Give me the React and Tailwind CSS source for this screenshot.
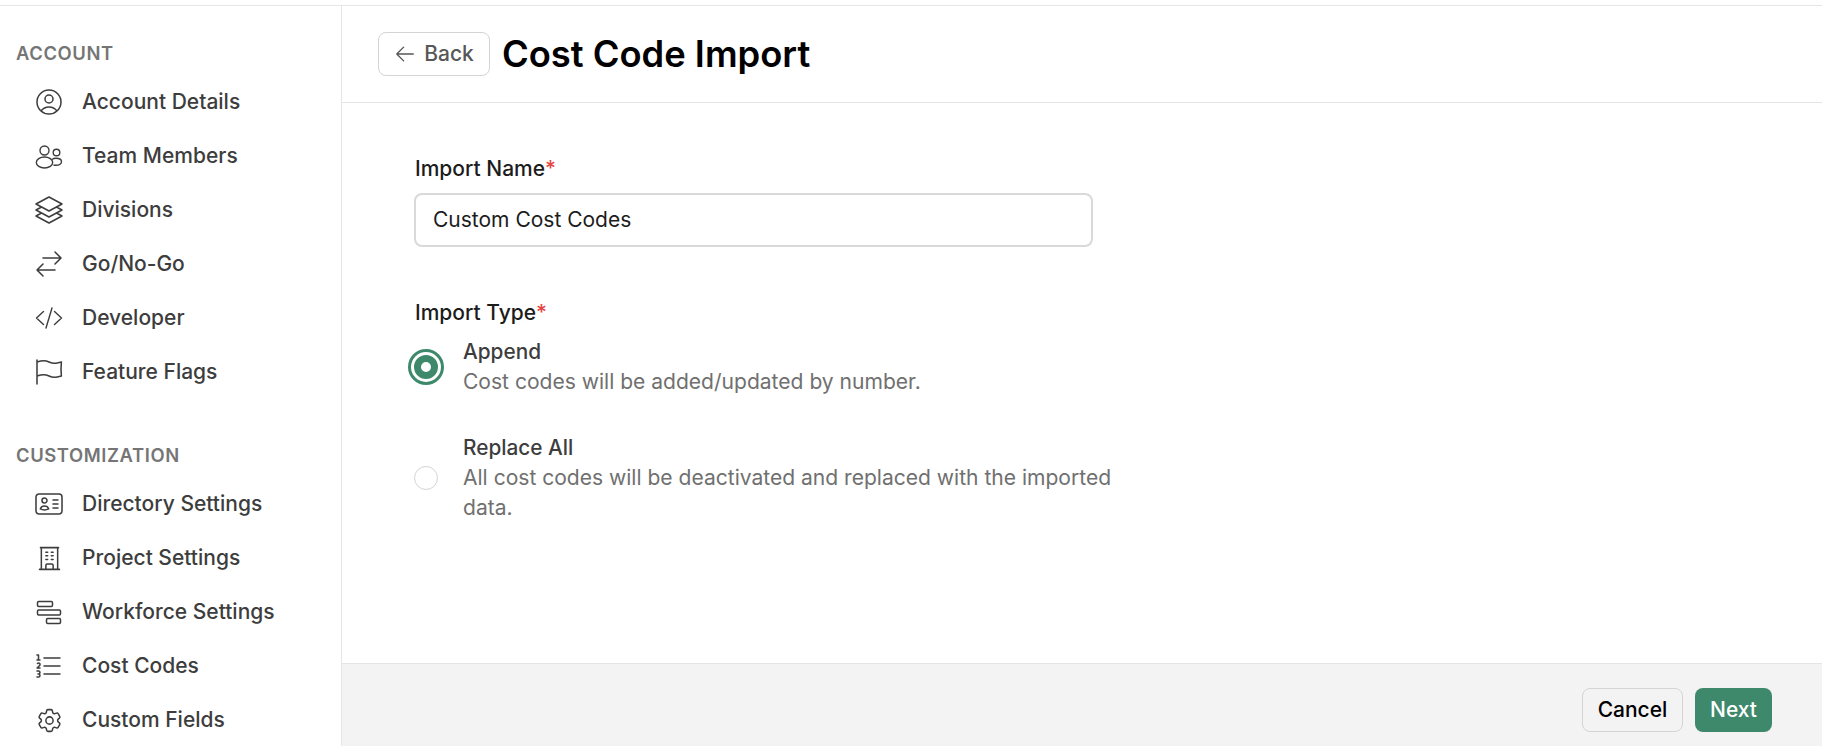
import React from "react";
import {
  HiOutlineUserCircle,
  HiOutlineSquare3Stack3D,
  HiOutlineArrowsRightLeft,
  HiOutlineFlag,
  HiOutlineIdentification,
  HiOutlineBuildingOffice,
  HiOutlineNumberedList,
  HiOutlineCog6Tooth,
  HiOutlineArrowLeft,
} from "react-icons/hi2";

function TeamIcon({ className }) {
  return (
    <svg viewBox="-2 -2 32 32" fill="none" stroke="currentColor" className={className}>
      <circle cx="9.5" cy="8.5" r="4.5" strokeWidth="1.4" />
      <circle cx="21.5" cy="10.5" r="3.3" strokeWidth="1.4" />
      <ellipse cx="9.5" cy="20.5" rx="8.2" ry="5.5" strokeWidth="1.4" />
      <path d="M17 17.5c1-.8 2.5-1.2 4-1.2 3 0 5.5 1.2 5.5 3.5 0 2-2.5 3.5-5.5 3.5-.8 0-1.7-.1-2.5-.3" strokeWidth="1.4" />
    </svg>
  );
}

function WorkforceIcon({ className }) {
  return (
    <svg viewBox="-2 -2 32 32" fill="none" stroke="currentColor" className={className}>
      <rect x="2.5" y="3.5" width="15" height="5" rx="1.2" strokeWidth="1.5" />
      <rect x="2.5" y="12" width="23" height="5" rx="1.2" strokeWidth="1.5" />
      <rect x="11.5" y="20.5" width="14" height="5" rx="1.2" strokeWidth="1.5" />
    </svg>
  );
}

function DeveloperIcon({ className }) {
  return (
    <svg viewBox="-2 -2 32 32" fill="none" stroke="currentColor" strokeLinecap="round" strokeLinejoin="round" className={className}>
      <path d="M8.5 7.5 1.5 14l7 6.5M19.5 7.5l7 6.5-7 6.5M17 4l-6 20" strokeWidth="1.4" />
    </svg>
  );
}

const accountItems = [
  { label: "Account Details", icon: HiOutlineUserCircle },
  { label: "Team Members", icon: TeamIcon },
  { label: "Divisions", icon: HiOutlineSquare3Stack3D },
  { label: "Go/No-Go", icon: HiOutlineArrowsRightLeft },
  { label: "Developer", icon: DeveloperIcon },
  { label: "Feature Flags", icon: HiOutlineFlag },
];

const customizationItems = [
  { label: "Directory Settings", icon: HiOutlineIdentification },
  { label: "Project Settings", icon: HiOutlineBuildingOffice, small: true },
  { label: "Workforce Settings", icon: WorkforceIcon },
  { label: "Cost Codes", icon: HiOutlineNumberedList },
  { label: "Custom Fields", icon: HiOutlineCog6Tooth, small: true },
];

function NavSection({ title, items }) {
  return (
    <div>
      <div className="pl-4 h-6 flex items-center text-[18.4px] font-semibold tracking-[0.6px] text-[#757575]">{title}</div>
      <ul className="mt-[9px]">
        {items.map((item) => (
          <li key={item.label} className="h-[54px] flex items-center pl-[33px] gap-[17px] text-[#3d3d3d]">
            <span className="w-8 h-8 shrink-0 flex items-center justify-center">
              <item.icon className={item.small ? "w-[29px] h-[29px] [stroke-width:1.25]" : "w-8 h-8 [stroke-width:1.15]"} />
            </span>
            <span className="text-[21px] font-medium">{item.label}</span>
          </li>
        ))}
      </ul>
    </div>
  );
}

function RadioOption({ checked, title, children }) {
  return (
    <div className="flex items-center gap-[25px]">
      {checked ? (
        <span className="w-6 h-6 shrink-0 rounded-full border-[7px] border-[#3e896c] bg-white ring-[3px] ring-[#3e896c] ring-offset-[3px] ring-offset-white" />
      ) : (
        <span className="w-6 h-6 shrink-0 rounded-full border border-[#d4d4d4] bg-white" />
      )}
      <div className="w-[680px]">
        <div className="text-[20.8px] font-medium leading-[30px] text-[#3d3d3d]">{title}</div>
        <div className="text-[21.05px] leading-[30px] text-[#707070]">{children}</div>
      </div>
    </div>
  );
}

export default function App() {
  return (
    <div className="h-[746px] overflow-hidden bg-white flex flex-col font-['Inter',sans-serif] text-black">
      <div className="h-[6px] shrink-0 border-b border-[#e5e5e5]" />
      <div className="flex flex-1 min-h-0">
        <aside className="w-[342px] shrink-0 border-r border-[#e5e5e5] pt-[36px] flex flex-col gap-[45px] overflow-hidden">
          <NavSection title="ACCOUNT" items={accountItems} />
          <NavSection title="CUSTOMIZATION" items={customizationItems} />
        </aside>
        <main className="flex-1 min-w-0 flex flex-col">
          <header className="h-[97px] shrink-0 border-b border-[#e5e5e5] flex items-center pl-[36px] gap-[12px]">
            <button className="h-[44px] w-[112px] rounded-lg border border-[#d4d4d4] flex items-center justify-center gap-[8px] text-[21px] font-medium text-[#575757]">
              <HiOutlineArrowLeft className="w-[22px] h-[22px]" />
              Back
            </button>
            <h1 className="text-[36.3px] font-semibold">Cost Code Import</h1>
          </header>
          <div className="flex-1 pl-[72px] pt-[51px]">
            <label className="block pl-[1px] text-[21px] font-medium leading-[30px] text-[#1c1c1c]">
              Import Name<span className="text-[#e54545]">*</span>
            </label>
            <div className="mt-[9px] w-[679px] h-[54px] rounded-lg border-2 border-[#d9d9d9] flex items-center pl-[17px] pr-[16px] text-[21px] text-[#1c1c1c]">
              Custom Cost Codes
            </div>
            <label className="block pl-[1px] mt-[51px] text-[21px] font-medium leading-[30px] text-[#1c1c1c]">
              Import Type<span className="text-[#e54545]">*</span>
            </label>
            <div className="flex flex-col gap-[36px] mt-[9px]">
              <RadioOption checked title="Append">Cost codes will be added/updated by number.</RadioOption>
              <RadioOption title="Replace All">All cost codes will be deactivated and replaced with the imported data.</RadioOption>
            </div>
          </div>
          <footer className="h-[83px] shrink-0 bg-[#f3f3f3] border-t border-[#e5e5e5] flex items-center justify-end gap-[12px] pr-[50px] pt-[10px]">
            <button className="h-[44px] w-[101px] rounded-lg border border-[#d4d4d4] text-[21px] font-medium text-black">Cancel</button>
            <button className="h-[44px] w-[77px] rounded-lg bg-[#3e896c] text-[21px] font-medium text-white">Next</button>
          </footer>
        </main>
      </div>
    </div>
  );
}
